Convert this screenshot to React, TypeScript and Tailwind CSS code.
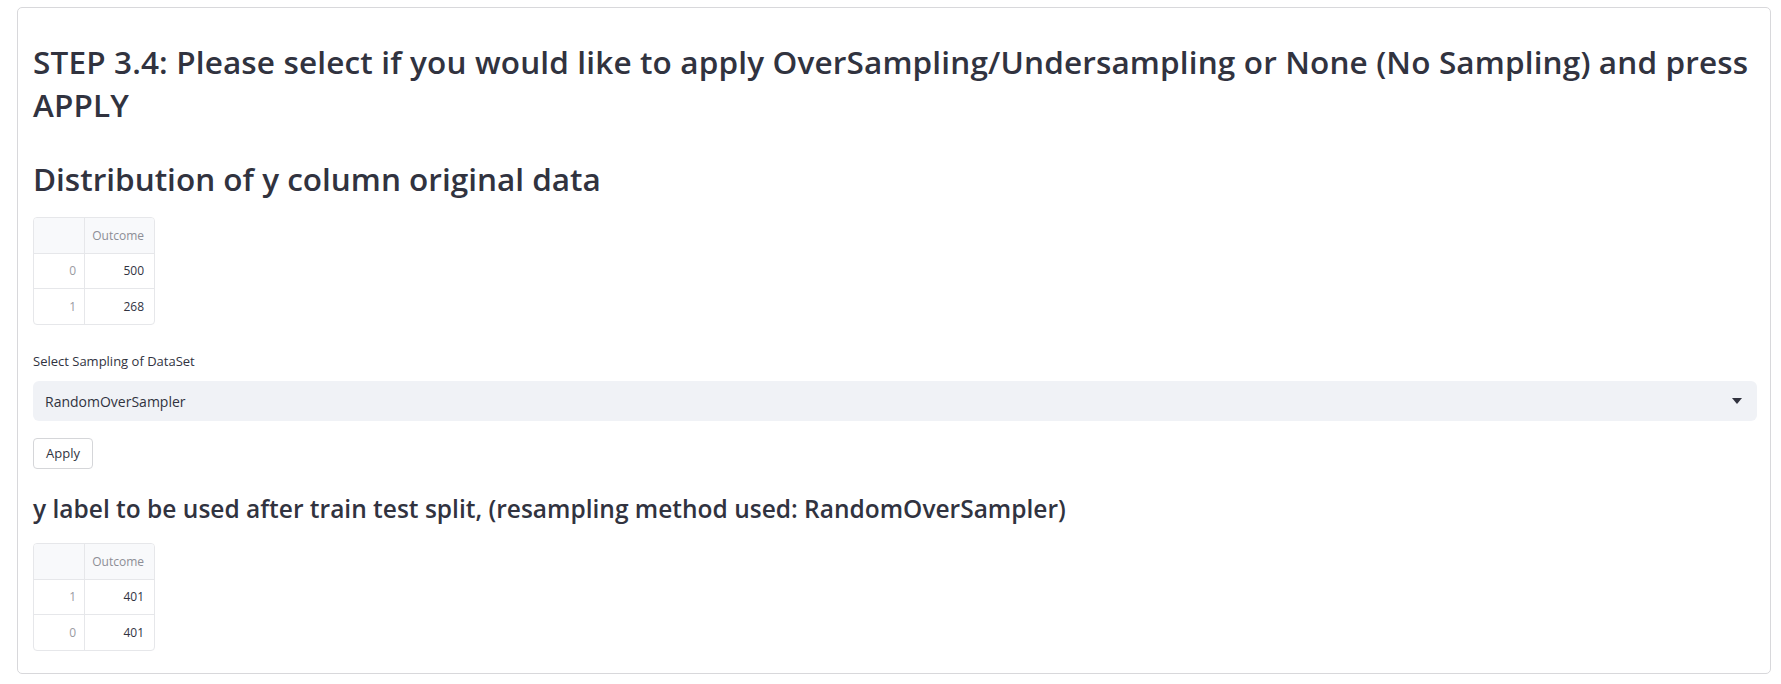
const font = { fontFamily: "'Open Sans', Lato, sans-serif" };

const firstTable = [
  { idx: "0", value: "500" },
  { idx: "1", value: "268" },
];

const secondTable = [
  { idx: "1", value: "401" },
  { idx: "0", value: "401" },
];

function DataTable({ rows }: { rows: { idx: string; value: string }[] }) {
  return (
    <div className="w-[122px] rounded-[4px] border border-[#e6e7ea] overflow-hidden text-[12px] text-[#31333f]">
      <div className="flex h-[36px] border-b border-[#e6e7ea] bg-[#f8f9fb]">
        <div className="w-[51px] border-r border-[#e6e7ea]" />
        <div className="flex-1 flex items-center justify-end pr-[10px] text-[#8d8e96]">Outcome</div>
      </div>
      {rows.map((r, i) => (
        <div
          key={i}
          className={`flex h-[35px] ${i < rows.length - 1 ? "border-b border-[#e6e7ea]" : ""}`}
        >
          <div className="w-[51px] border-r border-[#e6e7ea] flex items-center justify-end pr-[8px] text-[#9a9ba2]">
            {r.idx}
          </div>
          <div className="flex-1 flex items-center justify-end pr-[10px]">{r.value}</div>
        </div>
      ))}
    </div>
  );
}

export default function App() {
  return (
    <div className="min-h-screen bg-white pt-[7px] pl-[17px] pr-[10px]" style={font}>
      <div className="rounded-[5px] border border-[#d8d8db] pl-[15px] pr-[13px] pt-[32px] pb-[22px] text-[#31333f]">
        <h2 className="text-[31.5px] leading-[43px] font-semibold tracking-[0.15px]">
          STEP 3.4: Please select if you would like to apply OverSampling/Undersampling or None (No Sampling) and press APPLY
        </h2>

        <h2 className="mt-[33px] text-[31.5px] leading-[40px] font-semibold">
          Distribution of y column original data
        </h2>

        <div className="mt-[18px]">
          <DataTable rows={firstTable} />
        </div>

        <div className="mt-[28px] text-[13px] leading-[16px]">Select Sampling of DataSet</div>

        <div className="mt-[12px] h-[40px] rounded-[6px] bg-[#f0f2f6] flex items-center justify-between pl-[12px] pr-[15px]">
          <span className="text-[14px]">RandomOverSampler</span>
          <svg width="10" height="6" viewBox="0 0 10 6" className="fill-[#31333f]">
            <path d="M0 0h10L5 6z" />
          </svg>
        </div>

        <button className="mt-[17px] h-[31px] px-[12px] rounded-[4px] border border-[#d5d6d9] bg-white text-[13px]">
          Apply
        </button>

        <h3 className="mt-[23px] text-[24.5px] leading-[34px] font-semibold">
          y label to be used after train test split, (resampling method used: RandomOverSampler)
        </h3>

        <div className="mt-[17px]">
          <DataTable rows={secondTable} />
        </div>
      </div>
    </div>
  );
}
